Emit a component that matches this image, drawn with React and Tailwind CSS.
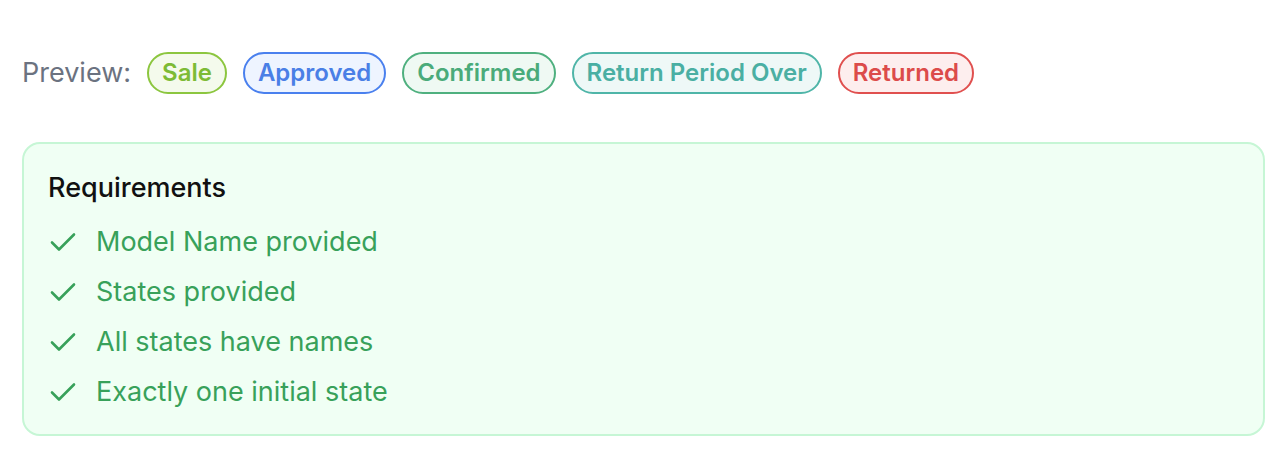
const badges = [
  { label: 'Sale', cls: 'border-[#8cc63f] text-[#7dbb35] bg-[#f4faec]' },
  { label: 'Approved', cls: 'border-[#4a80ee] text-[#4a7fe6] bg-[#eef4ff]' },
  { label: 'Confirmed', cls: 'border-[#4fb07f] text-[#4aab7a] bg-[#eff9f3]' },
  { label: 'Return Period Over', cls: 'border-[#4fb5a8] text-[#4aafa3] bg-[#eef8f7]' },
  { label: 'Returned', cls: 'border-[#e0504f] text-[#dc4b4a] bg-[#fdeeee]' },
]

const requirements = [
  'Model Name provided',
  'States provided',
  'All states have names',
  'Exactly one initial state',
]

function CheckMark() {
  return (
    <svg width="26" height="20" viewBox="0 0 26 20" fill="none" className="shrink-0">
      <path d="M2 10.5 9 17.5 24 2.5" stroke="#38a15a" strokeWidth="2.6" strokeLinecap="round" strokeLinejoin="round" />
    </svg>
  )
}

export default function App() {
  return (
    <div className="min-h-screen bg-white pl-[22px] pt-[52px] font-['Inter',sans-serif]">
      <div className="flex items-center">
        <span className="text-[27px] text-[#6b7280] mr-4">Preview:</span>
        <div className="flex gap-4">
          {badges.map((b) => (
            <span key={b.label} className={`h-[42px] flex items-center px-[13px] rounded-full border-2 text-[24px] font-semibold ${b.cls}`}>
              {b.label}
            </span>
          ))}
        </div>
      </div>

      <div className="mt-[48px] w-[1243px] rounded-[18px] border-2 border-[#c6f6d5] bg-[#f0fff4] pl-6 pt-[26px] pb-[17px]">
        <div className="text-[27px] leading-[36px] font-medium text-[#111]">Requirements</div>
        <ul className="mt-[11px]">
          {requirements.map((r) => (
            <li key={r} className="flex items-center h-[50px] gap-5 text-[27px] text-[#38a15a]">
              <span className="pl-[2px]"><CheckMark /></span>
              <span>{r}</span>
            </li>
          ))}
        </ul>
      </div>
    </div>
  )
}
